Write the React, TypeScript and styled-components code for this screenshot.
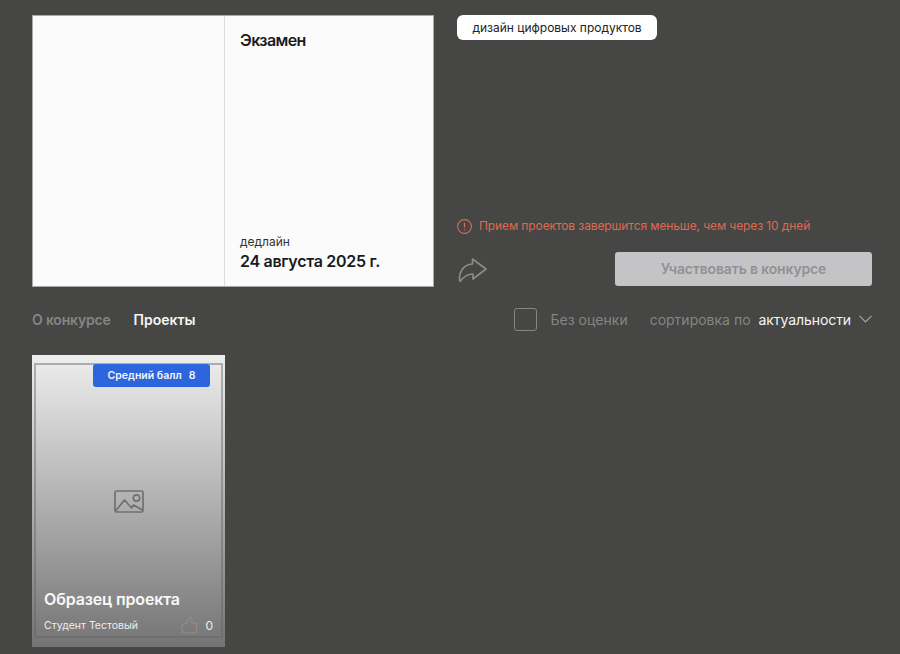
import React from 'react';
import styled, { createGlobalStyle } from 'styled-components';

const GlobalStyle = createGlobalStyle`
  html, body {
    margin: 0;
    padding: 0;
    background: #464644;
    font-family: Inter, "Liberation Sans", sans-serif;
  }
  * { box-sizing: border-box; }
`;

const Page = styled.div`
  width: 900px;
  height: 654px;
  overflow: hidden;
  padding: 15px 28px 0 32px;
`;

const Top = styled.div`
  display: flex;
  gap: 23px;
`;

const ContestCard = styled.div`
  width: 402px;
  height: 272px;
  flex: none;
  display: flex;
  background: #fbfbfb;
  border: 1px solid #a9a9a9;
`;

const Cover = styled.div`
  width: 192px;
  flex: none;
  border-right: 1px solid #dcdcdc;
`;

const CardInfo = styled.div`
  flex: 1;
  display: flex;
  flex-direction: column;
  justify-content: space-between;
  padding: 14px 15px 15px 15px;
  color: #1b1b1b;
`;

const CardTitle = styled.div`
  font-size: 16px;
  line-height: 20px;
  font-weight: 600;
  letter-spacing: -0.6px;
`;

const DeadlineLabel = styled.div`
  font-size: 12px;
  line-height: 15px;
  color: #333;
`;

const DeadlineDate = styled.div`
  margin-top: 2px;
  font-size: 16px;
  line-height: 20px;
  font-weight: 600;
  letter-spacing: -0.3px;
`;

const Side = styled.div`
  flex: 1;
  height: 271px;
  display: flex;
  flex-direction: column;
  align-items: flex-start;
`;

const Tag = styled.div`
  width: 200px;
  height: 25px;
  background: #fff;
  border-radius: 6px;
  font-size: 12px;
  line-height: 25px;
  text-align: center;
  color: #222;
`;

const Warning = styled.div`
  margin-top: auto;
  display: flex;
  align-items: center;
  gap: 7px;
  font-size: 12px;
  line-height: 16px;
  letter-spacing: -0.1px;
  color: #dd6a53;
`;

const Actions = styled.div`
  margin-top: 18px;
  width: 100%;
  display: flex;
  align-items: center;
  justify-content: space-between;
`;

const ParticipateButton = styled.button`
  width: 257px;
  height: 34px;
  border: none;
  border-radius: 3px;
  background: #c4c4c6;
  color: #919193;
  font-family: inherit;
  font-size: 14px;
  font-weight: 600;
  letter-spacing: -0.15px;
  padding: 0 0 1px;
`;

const Filters = styled.div`
  margin-top: 21px;
  height: 22px;
  display: flex;
  align-items: center;
`;

const Tab = styled.div<{ $active?: boolean }>`
  margin-right: 23px;
  font-size: 14px;
  font-weight: 600;
  letter-spacing: ${p => (p.$active ? '0' : '-0.2px')};
  color: ${p => (p.$active ? '#f5f5f5' : '#858585')};
`;

const CheckBox = styled.div`
  width: 23px;
  height: 23px;
  margin-left: auto;
  margin-right: 14px;
  border: 1px solid #858585;
  border-radius: 3px;
`;

const FilterText = styled.div<{ $light?: boolean }>`
  font-size: 14px;
  letter-spacing: ${p => (p.$light ? '-0.08px' : '0')};
  color: ${p => (p.$light ? '#f5f5f5' : '#858585')};
`;

const SortLabel = styled(FilterText)`
  margin-left: 22px;
  margin-right: 8px;
`;

const Chevron = styled.svg`
  margin-left: 8px;
  display: block;
`;

const ProjectCard = styled.div`
  position: relative;
  margin-top: 25px;
  width: 193px;
  height: 292px;
  padding: 8px 2px 9px;
  background: linear-gradient(#eeeeee, #747474);
`;

const Frame = styled.div`
  height: 100%;
  border: 2px solid rgba(100, 100, 100, 0.45);
  display: flex;
  flex-direction: column;
  padding: 0 8px 1px 8px;
`;

const ScoreBadge = styled.div`
  position: absolute;
  top: 9px;
  right: 15px;
  width: 117px;
  height: 23px;
  display: flex;
  align-items: center;
  justify-content: center;
  gap: 7px;
  background: #2d65dc;
  border-radius: 3px;
  color: #f4f6fb;
  font-size: 10.5px;
  font-weight: 600;
`;

const Placeholder = styled.div`
  flex: 1;
  display: flex;
  align-items: center;
  justify-content: center;
  padding-top: 48px;
`;

const ProjectTitle = styled.div`
  font-size: 16px;
  line-height: 20px;
  font-weight: 600;
  letter-spacing: -0.15px;
  color: #f8f8f8;
`;

const ProjectFooter = styled.div`
  margin-top: 6px;
  display: flex;
  align-items: center;
  justify-content: space-between;
  height: 20px;
  color: #eeeeee;
  font-size: 10.5px;
`;

const Likes = styled.div`
  display: flex;
  align-items: center;
  gap: 6px;
  font-size: 12px;
`;

export default function App() {
  return (
    <Page>
      <GlobalStyle />
      <Top>
        <ContestCard>
          <Cover />
          <CardInfo>
            <CardTitle>Экзамен</CardTitle>
            <div>
              <DeadlineLabel>дедлайн</DeadlineLabel>
              <DeadlineDate>24 августа 2025 г.</DeadlineDate>
            </div>
          </CardInfo>
        </ContestCard>
        <Side>
          <Tag>дизайн цифровых продуктов</Tag>
          <Warning>
            <svg width="15" height="15" viewBox="0 0 15 15" fill="none" stroke="#dd6a53" strokeWidth="1.1">
              <circle cx="7.5" cy="7.5" r="6.9" />
              <path d="M7.5 3.8v4.6M7.5 10.2v1.1" strokeWidth="1.3" />
            </svg>
            Прием проектов завершится меньше, чем через 10 дней
          </Warning>
          <Actions>
            <svg width="30" height="26" viewBox="0 0 30 26" fill="none" stroke="#8a8a8a" strokeWidth="1.7" strokeLinejoin="round">
              <path d="M15.500 3 29 13 16 23v-5c-5 0-9 2-13 7.500C1 17 6 8.500 15.500 8z" />
            </svg>
            <ParticipateButton>Участвовать в конкурсе</ParticipateButton>
          </Actions>
        </Side>
      </Top>
      <Filters>
        <Tab>О конкурсе</Tab>
        <Tab $active>Проекты</Tab>
        <CheckBox />
        <FilterText>Без оценки</FilterText>
        <SortLabel>сортировка по</SortLabel>
        <FilterText $light>актуальности</FilterText>
        <Chevron width="13" height="8" viewBox="0 0 13 8" fill="none" stroke="#a5a5a5" strokeWidth="1.2">
          <path d="M.5.8l6 6 6-6" />
        </Chevron>
      </Filters>
      <ProjectCard>
        <ScoreBadge>
          <span>Средний балл</span>
          <span>8</span>
        </ScoreBadge>
        <Frame>
          <Placeholder>
            <svg width="30" height="23" viewBox="0 0 30 23" fill="none" stroke="#707070" strokeWidth="1.7" strokeLinejoin="round">
              <rect x="1" y="1" width="28" height="21" rx="1.500" />
              <circle cx="22.500" cy="8" r="3.200" />
              <path d="M1.500 21 10.500 10l7 8 2-3 9 5" />
            </svg>
          </Placeholder>
          <ProjectTitle>Образец проекта</ProjectTitle>
          <ProjectFooter>
            <span>Студент Тестовый</span>
            <Likes>
              <svg width="19" height="19" viewBox="0 0 19 19" fill="none" stroke="#8e8e8e" strokeWidth="1.200" strokeLinejoin="round">
                <path d="M2 10c0-2 2.500-2.500 4.500-3l3-5c1.500-1.500 3-.5 2.500 2l-.5 3h4c2 0 2 3 .5 3.500 1.500.5 1.500 3 0 3.500 1 1 .5 3-1 3H7c-2.500 0-5-1-5-3z" />
              </svg>
              0
            </Likes>
          </ProjectFooter>
        </Frame>
      </ProjectCard>
    </Page>
  );
}
